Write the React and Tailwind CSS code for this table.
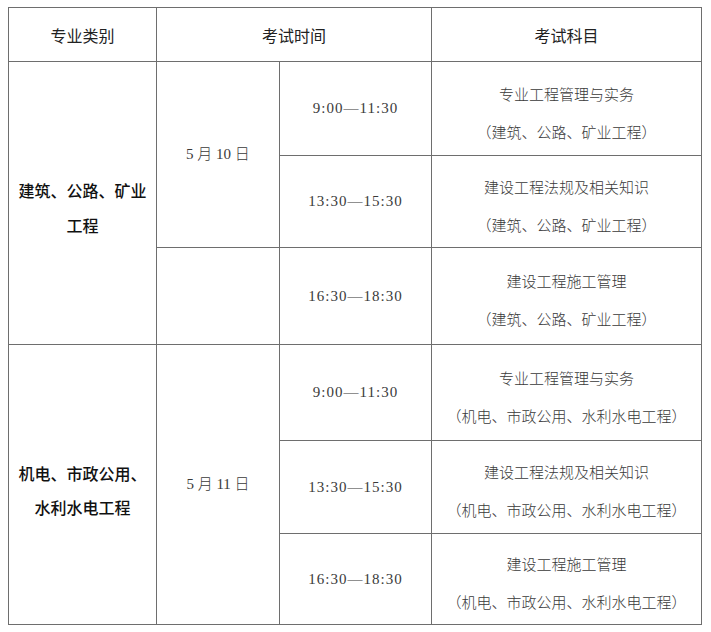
const sans = { fontFamily: '"Noto Sans CJK SC", "Noto Sans", sans-serif' };

const rows = [
  { h: 'h-[94px]', time: '9:00—11:30', subject: '专业工程管理与实务', scope: '（建筑、公路、矿业工程）' },
  { h: 'h-[92px]', time: '13:30—15:30', subject: '建设工程法规及相关知识', scope: '（建筑、公路、矿业工程）' },
  { h: 'h-[97px]', time: '16:30—18:30', subject: '建设工程施工管理', scope: '（建筑、公路、矿业工程）' },
  { h: 'h-[96px]', time: '9:00—11:30', subject: '专业工程管理与实务', scope: '（机电、市政公用、水利水电工程）' },
  { h: 'h-[93px]', time: '13:30—15:30', subject: '建设工程法规及相关知识', scope: '（机电、市政公用、水利水电工程）' },
  { h: 'h-[91px]', time: '16:30—18:30', subject: '建设工程施工管理', scope: '（机电、市政公用、水利水电工程）' },
];

const cell = 'border border-[#6e6e6e] text-center align-middle p-0';
const serif = 'font-["Liberation_Serif","Noto_Sans_CJK_SC",serif] font-light text-[#3a3a3a]';

function TimeCell({ value }) {
  return (
    <td className={`${cell} ${serif} text-[15px] tracking-[1px]`}>{value}</td>
  );
}

function SubjectCell({ subject, scope }) {
  return (
    <td className={`${cell} ${serif} text-[15px] leading-[38px] pt-[10px]`}>
      {subject}
      <br />
      {scope}
    </td>
  );
}

export default function App() {
  return (
    <div className="w-[711px] h-[632px] bg-white pt-[7px] pl-[8px]">
      <table className="table-fixed border-collapse w-[693px]">
        <colgroup>
          <col className="w-[148px]" />
          <col className="w-[123px]" />
          <col className="w-[152px]" />
          <col className="w-[270px]" />
        </colgroup>
        <tbody>
          <tr className="h-[54px]">
            <td className={`${cell} text-[16px] text-[#222]`} style={sans}>专业类别</td>
            <td colSpan={2} className={`${cell} text-[16px] text-[#222]`} style={sans}>考试时间</td>
            <td className={`${cell} text-[16px] text-[#222]`} style={sans}>考试科目</td>
          </tr>

          <tr className={rows[0].h}>
            <td rowSpan={3} className={`${cell} text-[16px] font-medium text-[#111] leading-[35px] pt-[10px]`} style={sans}>
              建筑、公路、矿业
              <br />
              工程
            </td>
            <td rowSpan={2} className={`${cell} ${serif} text-[15px]`}>5 月 10 日</td>
            <TimeCell value={rows[0].time} />
            <SubjectCell subject={rows[0].subject} scope={rows[0].scope} />
          </tr>
          <tr className={rows[1].h}>
            <TimeCell value={rows[1].time} />
            <SubjectCell subject={rows[1].subject} scope={rows[1].scope} />
          </tr>
          <tr className={rows[2].h}>
            <td className={cell}></td>
            <TimeCell value={rows[2].time} />
            <SubjectCell subject={rows[2].subject} scope={rows[2].scope} />
          </tr>

          <tr className={rows[3].h}>
            <td rowSpan={3} className={`${cell} text-[16px] font-medium text-[#111] leading-[34px] pt-[10px]`} style={sans}>
              机电、市政公用、
              <br />
              水利水电工程
            </td>
            <td rowSpan={3} className={`${cell} ${serif} text-[15px]`}>5 月 11 日</td>
            <TimeCell value={rows[3].time} />
            <SubjectCell subject={rows[3].subject} scope={rows[3].scope} />
          </tr>
          <tr className={rows[4].h}>
            <TimeCell value={rows[4].time} />
            <SubjectCell subject={rows[4].subject} scope={rows[4].scope} />
          </tr>
          <tr className={rows[5].h}>
            <TimeCell value={rows[5].time} />
            <SubjectCell subject={rows[5].subject} scope={rows[5].scope} />
          </tr>
        </tbody>
      </table>
    </div>
  );
}
